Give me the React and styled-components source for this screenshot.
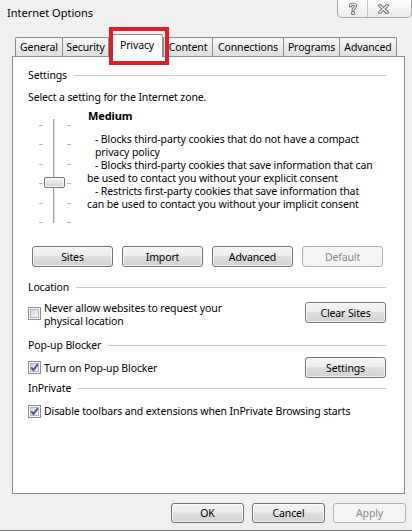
import React from "react";
import styled, { createGlobalStyle } from "styled-components";

const GlobalStyle = createGlobalStyle`
  html, body { margin: 0; padding: 0; background: #f7f7f7; }
  body {
    font-family: "Noto Sans", "Open Sans", "DejaVu Sans", sans-serif;
    font-size: 10.5px;
    letter-spacing: -0.12px;
    color: #000;
  }
  #root { width: 412px; }
`;

const Window = styled.div`
  box-sizing: border-box;
  width: 412px;
  height: 531px;
  background: #f0f0f0;
  border-bottom: 1px solid #7f7f7f;
  display: flex;
  flex-direction: column;
`;

const TitleBar = styled.div`
  height: 34px;
  display: flex;
  justify-content: space-between;
  align-items: flex-start;
`;

const Title = styled.div`
  padding: 6px 0 0 7px;
  font-size: 11px;
  letter-spacing: 0;
  line-height: 14px;
`;

const CaptionGroup = styled.div`
  display: flex;
  height: 18px;
  box-sizing: border-box;
  border: 1px solid #a8a8a8;
  border-top: none;
  border-radius: 0 0 5px 5px;
  background: linear-gradient(#fdfdfd, #ececec);
`;

const CaptionButton = styled.div`
  box-sizing: border-box;
  width: ${(p) => p.$w}px;
  display: flex;
  align-items: center;
  justify-content: ${(p) => (p.$pl ? "flex-start" : "center")};
  padding-left: ${(p) => p.$pl || 0}px;
  & + & {
    border-left: 1px solid #c4c4c4;
  }
`;

const TabStrip = styled.div`
  height: 23px;
  display: flex;
  align-items: flex-end;
  padding-left: 15px;
  margin-bottom: -1px;
  position: relative;
  z-index: 1;
`;

const Tab = styled.div`
  box-sizing: border-box;
  position: relative;
  width: ${(p) => p.$w}px;
  height: ${(p) => (p.$active ? 23 : 19)}px;
  margin-left: ${(p) => p.$ml || 0}px;
  margin-bottom: ${(p) => (p.$active ? 0 : 1)}px;
  border: 1px solid #898c95;
  border-bottom: none;
  border-radius: 2px 2px 0 0;
  background: ${(p) =>
    p.$active ? "#fff" : "linear-gradient(#f7f7f7, #ececec 50%, #dedede)"};
  display: flex;
  justify-content: center;
  align-items: ${(p) => (p.$active ? "flex-start" : "center")};
  padding-top: ${(p) => (p.$active ? 3 : 0)}px;
  line-height: 14px;
  z-index: ${(p) => (p.$active ? 2 : 1)};
`;

const Highlight = styled.div`
  position: absolute;
  left: -3px;
  top: -8px;
  width: 60px;
  height: 38px;
  box-sizing: border-box;
  border: 4px solid #e31b23;
  pointer-events: none;
`;

const Panel = styled.div`
  box-sizing: border-box;
  margin-left: 12px;
  width: 393px;
  height: 438px;
  border: 1px solid #898c95;
  background: #fff;
  padding: 11px 18px 0 15px;
  display: flex;
  flex-direction: column;
`;

const GroupHeader = styled.div`
  display: flex;
  align-items: center;
  height: 15px;
  line-height: 15px;
  margin-top: ${(p) => p.$mt || 0}px;
  &::after {
    content: "";
    flex: 1;
    height: 1px;
    margin-left: 7px;
    background: #c9c9c9;
  }
`;

const Text = styled.div`
  line-height: 14px;
  margin-top: ${(p) => p.$mt || 0}px;
`;

const SettingsBody = styled.div`
  display: flex;
  align-items: flex-start;
  padding-left: 8px;
  margin-top: 5px;
`;

const SliderBox = styled.div`
  position: relative;
  width: 36px;
  height: 110px;
  margin-top: 7px;
  flex-shrink: 0;
`;

const Thumb = styled.div`
  position: absolute;
  left: 8px;
  top: 61px;
  width: 21px;
  height: 11px;
  box-sizing: border-box;
  border: 1px solid #747474;
  border-radius: 2px;
  background: linear-gradient(#fafafa, #e4e4e4 50%, #d2d2d2);
  box-shadow: inset 0 0 0 1px rgba(255, 255, 255, 0.8);
`;

const Description = styled.div`
  margin-left: 15px;
  display: flex;
  flex-direction: column;
`;

const LevelName = styled.div`
  font-weight: bold;
  font-size: 11px;
  line-height: 14px;
  padding-left: 1px;
  margin-bottom: 10px;
`;

const DescLine = styled.div`
  line-height: 13px;
  padding-left: ${(p) => (p.$indent ? 8 : 0)}px;
  white-space: nowrap;
`;

const ButtonRow = styled.div`
  display: flex;
  gap: 9px;
  padding-left: 4px;
  margin-top: 20px;
`;

const Button = styled.div`
  box-sizing: border-box;
  width: ${(p) => p.$w || 81}px;
  height: ${(p) => p.$h || 21}px;
  display: flex;
  align-items: center;
  justify-content: center;
  flex-shrink: 0;
  border-radius: 3px;
  border: 1px solid ${(p) => (p.$disabled ? "#adb2b5" : "#707070")};
  color: ${(p) => (p.$disabled ? "#8a8a8a" : "#000")};
  background: ${(p) =>
    p.$disabled
      ? "#f4f4f4"
      : "linear-gradient(#f4f4f4, #ececec 45%, #dfdfdf 50%, #d2d2d2)"};
  box-shadow: ${(p) =>
    p.$disabled ? "none" : "inset 0 0 0 1px rgba(255,255,255,0.75)"};
`;

const OptionRow = styled.div`
  display: flex;
  justify-content: space-between;
  align-items: ${(p) => p.$align || "center"};
  margin-top: ${(p) => p.$mt || 0}px;
`;

const CheckLabel = styled.div`
  display: flex;
  align-items: ${(p) => p.$align || "center"};
`;

const Box = styled.span`
  display: inline-flex;
  flex-shrink: 0;
  margin-right: 3px;
  margin-top: ${(p) => p.$mt || 0}px;
`;

const LabelText = styled.div`
  line-height: ${(p) => p.$lh || 14}px;
`;

const Footer = styled.div`
  display: flex;
  justify-content: flex-end;
  gap: 8px;
  padding-right: 6px;
  margin-top: 9px;
`;

const HelpIcon = () => (
  <svg width="10" height="13" viewBox="0 0 10 13">
    <g fill="none" strokeLinecap="round">
      <path d="M2.5 4 C2.5 1.5 7.5 1.5 7.5 4 C7.5 6 5 6 5 8.2" stroke="#6a6a6a" strokeWidth="3" />
      <circle cx="5" cy="11" r="0.6" stroke="#6a6a6a" strokeWidth="3" />
      <path d="M2.5 4 C2.5 1.5 7.5 1.5 7.5 4 C7.5 6 5 6 5 8.2" stroke="#f7f7f7" strokeWidth="1.2" />
      <circle cx="5" cy="11" r="0.2" stroke="#f7f7f7" strokeWidth="1" />
    </g>
  </svg>
);

const CloseIcon = () => (
  <svg width="11" height="10" viewBox="0 0 11 10">
    <g fill="none" strokeLinecap="square">
      <path d="M1.8 1.5 L9.2 8.5 M9.2 1.5 L1.8 8.5" stroke="#6a6a6a" strokeWidth="3.2" />
      <path d="M1.8 1.5 L9.2 8.5 M9.2 1.5 L1.8 8.5" stroke="#f5f5f5" strokeWidth="1.3" />
    </g>
  </svg>
);

const Checkbox = ({ checked, mt }) => (
  <Box $mt={mt}>
    <svg width="13" height="13" viewBox="0 0 13 13">
      <defs>
        <linearGradient id="cbfill" x1="0" y1="0" x2="1" y2="1">
          <stop offset="0" stopColor="#d3d6db" />
          <stop offset="1" stopColor="#f7f7f7" />
        </linearGradient>
      </defs>
      <rect x="0.5" y="0.5" width="12" height="12" fill="#f6f6f6" stroke="#8e8f8f" />
      <rect x="2.5" y="2.5" width="8" height="8" fill="url(#cbfill)" stroke="#b3b7bc" />
      {checked && (
        <path
          d="M3.3 6.4 L5.4 9 L9.8 3.3"
          fill="none"
          stroke="#42568f"
          strokeWidth="1.9"
        />
      )}
    </svg>
  </Box>
);

const ticks = [9, 28, 48, 67, 87, 106];

const SliderDrawing = () => (
  <svg width="36" height="110" viewBox="0 0 36 110">
    <rect x="17" y="3" width="1" height="104" fill="#a3a3a3" />
    <rect x="18" y="3" width="1" height="104" fill="#e0e0e0" />
    {ticks.map((y) => (
      <g key={y}>
        <rect x="3" y={y} width="4" height="1" fill="#b9b9b9" />
        <rect x="31" y={y} width="4" height="1" fill="#b9b9b9" />
      </g>
    ))}
  </svg>
);

const tabs = [
  { label: "General", w: 48, ml: 0 },
  { label: "Security", w: 47, ml: -1 },
  { label: "Privacy", w: 52, ml: 2, active: true },
  { label: "Content", w: 50, ml: 0 },
  { label: "Connections", w: 72, ml: -1 },
  { label: "Programs", w: 57, ml: -1 },
  { label: "Advanced", w: 58, ml: -1 },
];

const descLines = [
  { t: "- Blocks third-party cookies that do not have a compact", i: true },
  { t: "privacy policy", i: true },
  { t: "- Blocks third-party cookies that save information that can", i: true },
  { t: "be used to contact you without your explicit consent", i: false },
  { t: "- Restricts first-party cookies that save information that", i: true },
  { t: "can be used to contact you without your implicit consent", i: false },
];

export default function App() {
  return (
    <>
      <GlobalStyle />
      <Window>
        <TitleBar>
          <Title>Internet Options</Title>
          <CaptionGroup>
            <CaptionButton $w={29}>
              <HelpIcon />
            </CaptionButton>
            <CaptionButton $w={44} $pl={10}>
              <CloseIcon />
            </CaptionButton>
          </CaptionGroup>
        </TitleBar>

        <TabStrip>
          {tabs.map((t) => (
            <Tab key={t.label} $w={t.w} $ml={t.ml} $active={t.active}>
              {t.label}
              {t.active && <Highlight />}
            </Tab>
          ))}
        </TabStrip>

        <Panel>
          <GroupHeader>Settings</GroupHeader>
          <Text $mt={7}>Select a setting for the Internet zone.</Text>
          <SettingsBody>
            <SliderBox>
              <SliderDrawing />
              <Thumb />
            </SliderBox>
            <Description>
              <LevelName>Medium</LevelName>
              {descLines.map((l) => (
                <DescLine key={l.t} $indent={l.i}>
                  {l.t}
                </DescLine>
              ))}
            </Description>
          </SettingsBody>
          <ButtonRow>
            <Button>Sites</Button>
            <Button>Import</Button>
            <Button>Advanced</Button>
            <Button $disabled>Default</Button>
          </ButtonRow>

          <GroupHeader $mt={13}>Location</GroupHeader>
          <OptionRow $mt={7} $align="flex-start">
            <CheckLabel $align="flex-start">
              <Checkbox mt={5} />
              <LabelText $lh={13}>
                Never allow websites to request your
                <br />
                physical location
              </LabelText>
            </CheckLabel>
            <Button>Clear Sites</Button>
          </OptionRow>

          <GroupHeader $mt={10}>Pop-up Blocker</GroupHeader>
          <OptionRow $mt={4}>
            <CheckLabel>
              <Checkbox checked />
              <LabelText>Turn on Pop-up Blocker</LabelText>
            </CheckLabel>
            <Button>Settings</Button>
          </OptionRow>

          <GroupHeader $mt={3}>InPrivate</GroupHeader>
          <OptionRow $mt={8}>
            <CheckLabel>
              <Checkbox checked />
              <LabelText>
                Disable toolbars and extensions when InPrivate Browsing starts
              </LabelText>
            </CheckLabel>
          </OptionRow>
        </Panel>

        <Footer>
          <Button $w={73} $h={20}>OK</Button>
          <Button $w={73} $h={20}>Cancel</Button>
          <Button $w={73} $h={20} $disabled>Apply</Button>
        </Footer>
      </Window>
    </>
  );
}
